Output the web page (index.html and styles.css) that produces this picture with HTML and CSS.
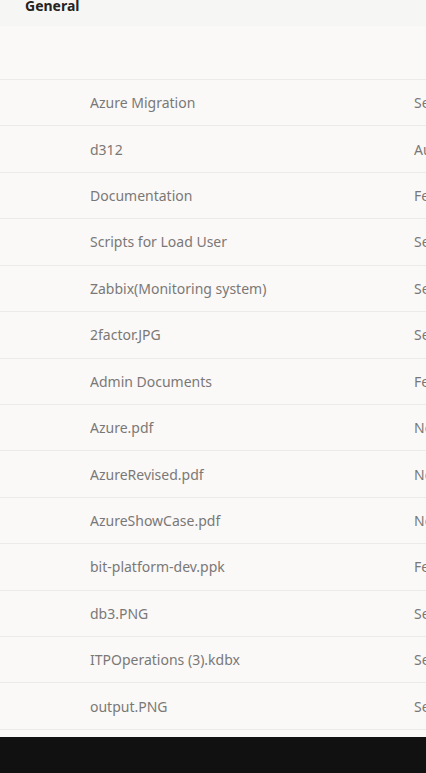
FILE: index.html
```html
<!DOCTYPE html>
<html lang="en">
<head>
<meta charset="utf-8">
<title>General - Files</title>
<link rel="stylesheet" href="styles.css">
</head>
<body>
<div class="app">
  <header class="channel-header">
    <h1 class="channel-title">General</h1>
  </header>
  <div class="toolbar-space"></div>
  <ul class="file-list">
    <li class="file-row"><span class="file-name">Azure Migration</span><span class="file-date">Sep 14, 2021</span></li>
    <li class="file-row"><span class="file-name">d312</span><span class="file-date">Aug 3, 2021</span></li>
    <li class="file-row"><span class="file-name">Documentation</span><span class="file-date">Feb 9, 2021</span></li>
    <li class="file-row"><span class="file-name">Scripts for Load User</span><span class="file-date">Sep 20, 2021</span></li>
    <li class="file-row"><span class="file-name">Zabbix(Monitoring system)</span><span class="file-date">Sep 7, 2021</span></li>
    <li class="file-row"><span class="file-name">2factor.JPG</span><span class="file-date">Sep 2, 2021</span></li>
    <li class="file-row"><span class="file-name">Admin Documents</span><span class="file-date">Feb 9, 2021</span></li>
    <li class="file-row"><span class="file-name">Azure.pdf</span><span class="file-date">Nov 4, 2020</span></li>
    <li class="file-row"><span class="file-name">AzureRevised.pdf</span><span class="file-date">Nov 4, 2020</span></li>
    <li class="file-row"><span class="file-name">AzureShowCase.pdf</span><span class="file-date">Nov 4, 2020</span></li>
    <li class="file-row"><span class="file-name">bit-platform-dev.ppk</span><span class="file-date">Feb 22, 2021</span></li>
    <li class="file-row"><span class="file-name">db3.PNG</span><span class="file-date">Sep 2, 2021</span></li>
    <li class="file-row"><span class="file-name">ITPOperations (3).kdbx</span><span class="file-date">Sep 1, 2021</span></li>
    <li class="file-row"><span class="file-name">output.PNG</span><span class="file-date">Sep 2, 2021</span></li>
  </ul>
  <div class="bottom-bar"></div>
</div>
</body>
</html>
```
FILE: styles.css
```css
html, body {
  margin: 0;
  padding: 0;
}
body {
  background: #faf9f8;
  font-family: "Noto Sans", "Open Sans", sans-serif;
  overflow: hidden;
}
.app {
  width: 426px;
  height: 773px;
  display: flex;
  flex-direction: column;
  overflow: hidden;
}
.channel-header {
  height: 26px;
  flex: none;
  background: #f6f6f5;
  padding-left: 25px;
  overflow: hidden;
}
.channel-title {
  margin: -4px 0 0 0;
  font-size: 14px;
  line-height: 20px;
  font-weight: 700;
  color: #252423;
}
.toolbar-space {
  height: 53px;
  flex: none;
  border-bottom: 1px solid #edebe9;
}
.file-list {
  list-style: none;
  margin: 0;
  padding: 0;
  flex: none;
}
.file-row {
  box-sizing: border-box;
  height: 46.43px;
  display: grid;
  grid-template-columns: 90px 324px 1fr;
  align-items: center;
  border-bottom: 1px solid #edebe9;
  font-size: 14px;
  color: #7a7876;
  white-space: nowrap;
  overflow: hidden;
}
.file-name {
  grid-column: 2;
  overflow: hidden;
}
.file-date {
  grid-column: 3;
  overflow: hidden;
}
.bottom-bar {
  margin-top: 7px;
  flex: 1;
  background: #111111;
}
```
